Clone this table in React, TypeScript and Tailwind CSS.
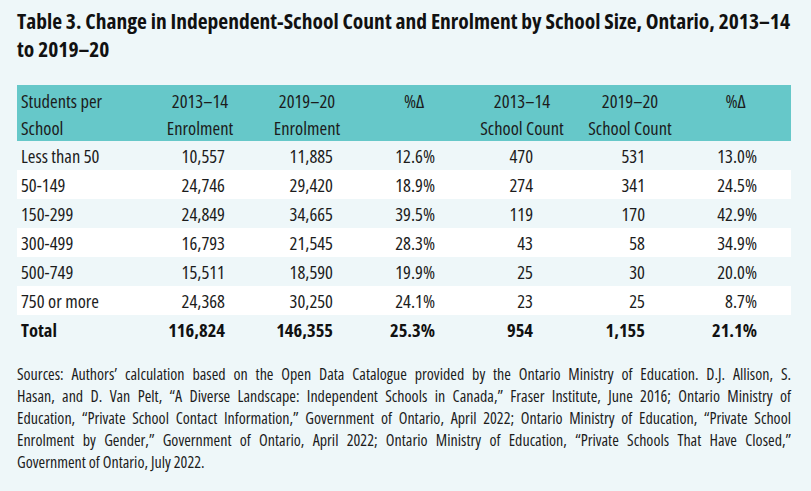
const rows = [
  ["Less than 50", "10,557", "11,885", "12.6%", "470", "531", "13.0%"],
  ["50-149", "24,746", "29,420", "18.9%", "274", "341", "24.5%"],
  ["150-299", "24,849", "34,665", "39.5%", "119", "170", "42.9%"],
  ["300-499", "16,793", "21,545", "28.3%", "43", "58", "34.9%"],
  ["500-749", "15,511", "18,590", "19.9%", "25", "30", "20.0%"],
  ["750 or more", "24,368", "30,250", "24.1%", "23", "25", "8.7%"],
  ["Total", "116,824", "146,355", "25.3%", "954", "1,155", "21.1%"],
];

// column widths + right padding for the number cells
const cols = [
  { w: "w-[133px]", pr: "" },
  { w: "w-[100px]", pr: "pr-[25px]" },
  { w: "w-[114px]", pr: "pr-[31px]" },
  { w: "w-[100px]", pr: "pr-[29px]" },
  { w: "w-[116px]", pr: "pr-[47px]" },
  { w: "w-[100px]", pr: "pr-[35px]" },
  { w: "w-[111px]", pr: "pr-[34px]" },
];

const headers = [
  ["Students per", "School"],
  ["2013–14", "Enrolment"],
  ["2019–20", "Enrolment"],
  ["%Δ", ""],
  ["2013–14", "School Count"],
  ["2019–20", "School Count"],
  ["%Δ", ""],
];

const sources = [
  "Sources: Authors’ calculation based on the Open Data Catalogue provided by the Ontario Ministry of Education. D.J. Allison, S.",
  "Hasan, and D. Van Pelt, “A Diverse Landscape: Independent Schools in Canada,” Fraser Institute, June 2016; Ontario Ministry of",
  "Education, “Private School Contact Information,” Government of Ontario, April 2022; Ontario Ministry of Education, “Private School",
  "Enrolment by Gender,” Government of Ontario, April 2022; Ontario Ministry of Education, “Private Schools That Have Closed,”",
];

export default function App() {
  return (
    <div className="w-[811px] h-[491px] bg-[#eef7f9] text-[#1c1c1c] font-['Open_Sans',sans-serif] [font-stretch:75%] px-[17px] pt-[7px] overflow-hidden">
      <h1 className="text-[21.5px] leading-[28px] font-bold text-[#111] whitespace-nowrap">
        Table 3. Change in Independent-School Count and Enrolment by School Size, Ontario, 2013–14
        <br />
        to 2019–20
      </h1>

      <div className="mt-[22px] w-[774px]">
        <div className="flex bg-[#66c8c9] h-[56px] text-[18.5px] leading-[27px] pt-[2px]">
          {headers.map((h, i) => (
            <div
              key={i}
              className={`${cols[i].w} ${i === 0 ? "pl-[4px] text-left" : "text-center"} whitespace-nowrap`}
            >
              <div>{h[0]}</div>
              <div>{h[1]}</div>
            </div>
          ))}
        </div>

        {rows.map((r, ri) => (
          <div
            key={ri}
            className={`flex h-[29px] text-[18.5px] leading-[29px] ${ri % 2 === 1 ? "bg-white" : ""} ${ri === rows.length - 1 ? "font-bold text-[#111]" : ""}`}
          >
            {r.map((c, ci) => (
              <div
                key={ci}
                className={`${cols[ci].w} ${ci === 0 ? "pl-[4px] text-left" : `text-right ${cols[ci].pr}`} whitespace-nowrap`}
              >
                {c}
              </div>
            ))}
          </div>
        ))}
      </div>

      <div className="mt-[19px] w-[774px] text-[16px] leading-[22px]">
        {sources.map((s, i) => (
          <div key={i} className="whitespace-nowrap [text-align-last:justify] text-justify">
            {s}
          </div>
        ))}
        <div>Government of Ontario, July 2022.</div>
      </div>
    </div>
  );
}
